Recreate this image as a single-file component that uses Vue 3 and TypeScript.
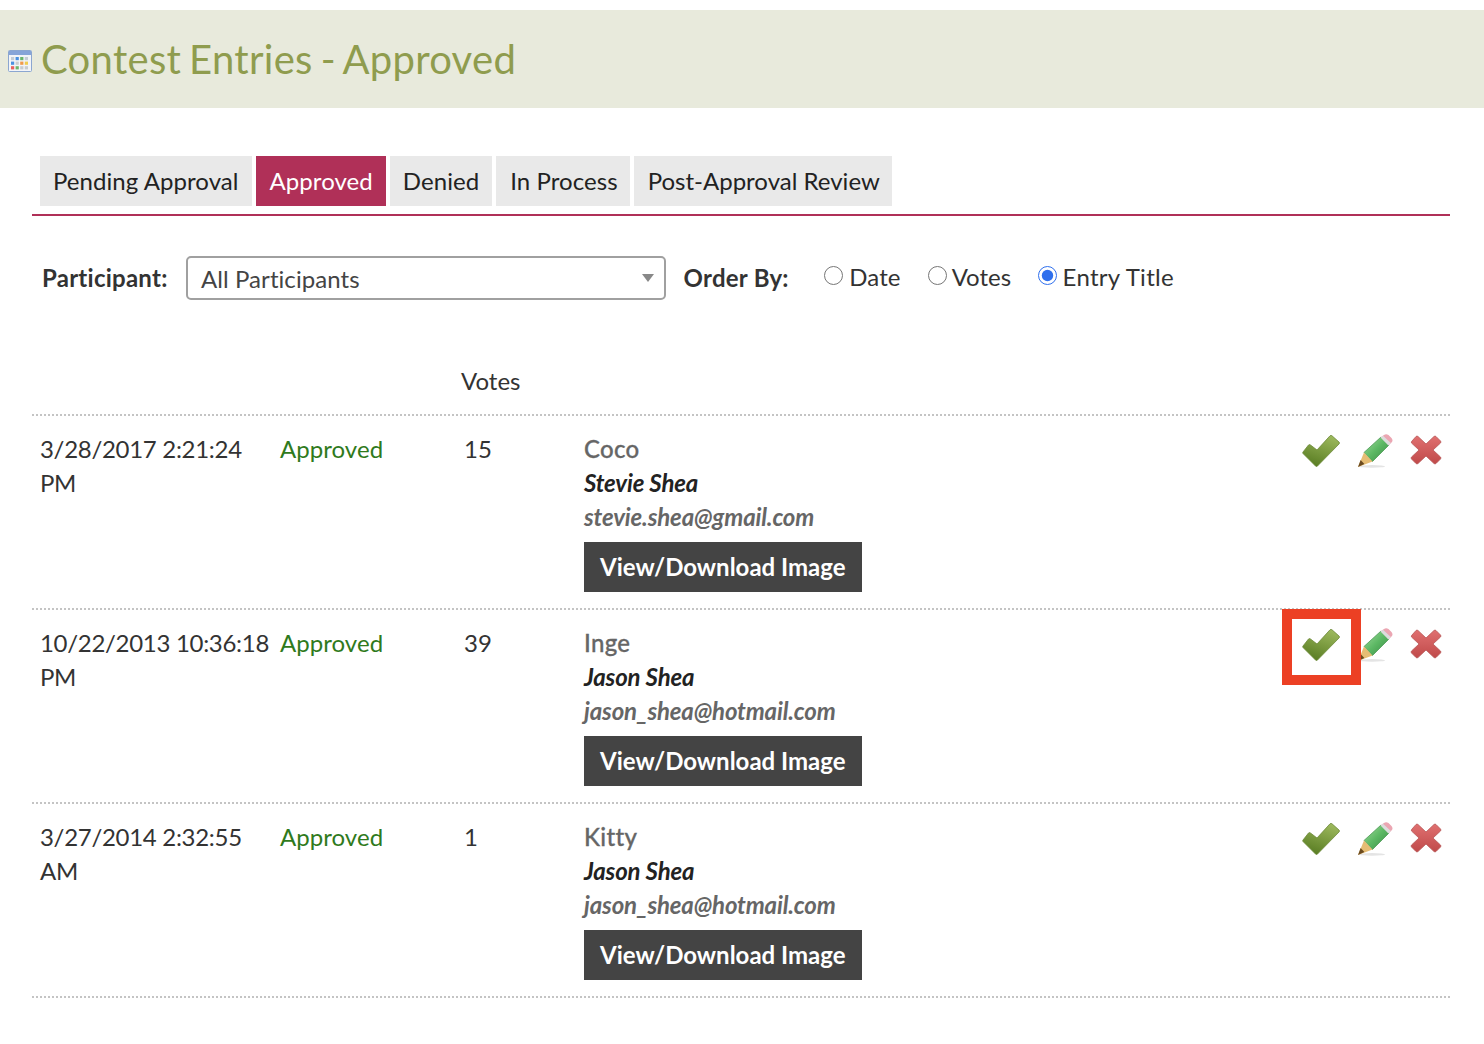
<script setup lang="ts">
interface Entry {
  date: string
  votes: number
  title: string
  name: string
  email: string
  flagged?: boolean
}

const tabs = ['Pending Approval', 'Approved', 'Denied', 'In Process', 'Post-Approval Review']
const radios = [
  { label: 'Date', checked: false, cls: 'r-date' },
  { label: 'Votes', checked: false, cls: 'r-votes' },
  { label: 'Entry Title', checked: true, cls: 'r-title' },
]
const entries: Entry[] = [
  { date: '3/28/2017 2:21:24 PM', votes: 15, title: 'Coco', name: 'Stevie Shea', email: 'stevie.shea@gmail.com' },
  { date: '10/22/2013 10:36:18 PM', votes: 39, title: 'Inge', name: 'Jason Shea', email: 'jason_shea@hotmail.com', flagged: true },
  { date: '3/27/2014 2:32:55 AM', votes: 1, title: 'Kitty', name: 'Jason Shea', email: 'jason_shea@hotmail.com' },
]
const calColors = ['#c4ccd4', '#4a90e0', '#6cb56c', '#c4ccd4', '#4a90e0', '#c8ccd0', '#f09a4a', '#f0cc50', '#e86060', '#6cb56c', '#c8ccd0', '#c8ccd0']
</script>

<template>
  <div class="page">
    <header class="banner">
      <svg class="cal" viewBox="0 0 24 22" aria-hidden="true">
        <rect x="0.5" y="0.5" width="23" height="21" rx="1" fill="#f2f4f8" stroke="#8ba6d0" />
        <rect x="1" y="1" width="22" height="4" fill="#86a4d8" />
        <rect
          v-for="(c, i) in calColors"
          :key="i"
          :x="3 + (i % 4) * 4.6"
          :y="7 + Math.floor(i / 4) * 4.6"
          width="3.2"
          height="3.2"
          :fill="c"
        />
      </svg>
      <h1>Contest Entries - Approved</h1>
    </header>

    <main class="content">
      <nav class="tabs">
        <a v-for="t in tabs" :key="t" class="tab" :class="{ active: t === 'Approved' }">{{ t }}</a>
      </nav>

      <div class="filters">
        <label class="f-label">Participant:</label>
        <div class="select">All Participants<span class="caret"></span></div>
        <span class="f-label order">Order By:</span>
        <label v-for="r in radios" :key="r.label" class="radio" :class="r.cls">
          <input type="radio" name="order" :checked="r.checked" />{{ r.label }}
        </label>
      </div>

      <div class="head-row"><span class="votes-head">Votes</span></div>

      <section class="list">
        <article v-for="e in entries" :key="e.title" class="row">
          <div class="date">{{ e.date }}</div>
          <div class="status">Approved</div>
          <div class="votes">{{ e.votes }}</div>
          <div class="info">
            <div class="title">{{ e.title }}</div>
            <div class="name">{{ e.name }}</div>
            <div class="email">{{ e.email }}</div>
            <a class="btn">View/Download Image</a>
          </div>
          <div class="actions">
            <svg class="ic-check" viewBox="0 0 38 32" aria-hidden="true">
              <defs>
                <linearGradient id="chk" x1="0.7" y1="0" x2="0.3" y2="1">
                  <stop offset="0" stop-color="#9cb85c" />
                  <stop offset="1" stop-color="#587c22" />
                </linearGradient>
              </defs>
              <path d="M1 17 L6.5 10 Q7.5 9 8.5 10 L15 15 L28 .8 Q29 0 30 .8 L37 7 Q38 8 37 9 L15.5 31 Q14.5 32 13.5 31 L1 18.5 Q.4 17.8 1 17 Z" fill="url(#chk)" stroke="#6d8a3a" stroke-width="0.8" />
            </svg>
            <svg class="ic-pencil" viewBox="0 0 36 34" aria-hidden="true">
              <defs>
                <linearGradient id="pen" x1="0" y1="0" x2="1" y2="1">
                  <stop offset="0" stop-color="#a4dca0" />
                  <stop offset="0.5" stop-color="#5cb864" />
                  <stop offset="1" stop-color="#378a42" />
                </linearGradient>
              </defs>
              <ellipse cx="15" cy="32.4" rx="13" ry="1.3" fill="#e4e4e4" />
              <path d="M7 18.5 L24 3 L32 11 L15.5 27.5 Z" fill="url(#pen)" stroke="#4c9a55" stroke-width="0.8" />
              <path d="M24 3 L27 1 Q29 -0.5 31.5 1 L34.5 4 Q36.5 6.5 34.5 8.5 L32 11 Z" fill="#eba6b2" />
              <path d="M23.5 3.5 L26 1.8 L33.8 9 L31.4 11.6 Z" fill="#dcdcdc" />
              <path d="M7 18.5 L15.5 27.5 L1 33 Z" fill="#e6bd74" />
              <path d="M3.6 26 L7.4 30 L1 33 Z" fill="#6b4a1e" />
            </svg>
            <svg class="ic-x" viewBox="0 0 32 30" aria-hidden="true">
              <defs>
                <linearGradient id="xg" x1="0" y1="0" x2="0" y2="1">
                  <stop offset="0" stop-color="#e07070" />
                  <stop offset="1" stop-color="#c04a4a" />
                </linearGradient>
              </defs>
              <path d="M2 6 L6 1.5 Q7 .6 8 1.5 L16 9 L24 1.5 Q25 .6 26 1.5 L30.5 6 Q31.4 7 30.5 8 L23 15 L30.5 22 Q31.4 23 30.5 24 L26 28.5 Q25 29.4 24 28.5 L16 21 L8 28.5 Q7 29.4 6 28.5 L1.5 24 Q.6 23 1.5 22 L9 15 L1.5 8 Q1 7 2 6 Z" fill="url(#xg)" stroke="#b85858" stroke-width="0.8" />
            </svg>
          </div>
          <div v-if="e.flagged" class="flag"></div>
        </article>
      </section>
    </main>
  </div>
</template>

<style scoped>
.page {
  padding-top: 10px;
  font-family: Lato, "Liberation Sans", sans-serif;
  font-size: 24px;
  line-height: 34px;
  color: #333;
}
.banner {
  height: 98px;
  background: #e8eadc;
  display: flex;
  align-items: center;
  padding-left: 8px;
  box-sizing: border-box;
}
.cal {
  width: 24px;
  height: 22px;
  margin-right: 9px;
  margin-top: 4px;
}
h1 {
  margin: 0;
  font-size: 40px;
  font-weight: 400;
  color: #8f9c4e;
  line-height: 48px;
  letter-spacing: 0.3px;
  word-spacing: -2.6px;
}
.content {
  padding: 48px 34px 0 32px;
}
.tabs {
  display: flex;
  gap: 4px;
  padding: 0 0 8px 8px;
  border-bottom: 2px solid #b03058;
}
.tab {
  height: 50px;
  line-height: 50px;
  padding: 0 13px;
  background: #e9e9e9;
  color: #222;
  letter-spacing: 0.06px;
}
.tab:nth-child(4) {
  padding-left: 14px;
  padding-right: 12px;
}
.tab:last-child {
  padding-left: 14px;
  padding-right: 12px;
  letter-spacing: 0.01px;
}
.tab.active {
  background: #b03058;
  color: #fff;
  padding-left: 14px;
}
.filters {
  display: flex;
  align-items: center;
  height: 44px;
  margin-top: 40px;
  padding-left: 10px;
}
.f-label {
  font-weight: 700;
  color: #333;
  letter-spacing: 0.25px;
}
.select {
  position: relative;
  width: 480px;
  height: 44px;
  line-height: 42px;
  margin-left: 18px;
  padding-left: 13.5px;
  box-sizing: border-box;
  border: 2px solid #a0a0a0;
  border-radius: 5px;
  color: #444;
  background: #fff;
  letter-spacing: 0.06px;
}
.caret {
  position: absolute;
  right: 10px;
  top: 16px;
  width: 0;
  height: 0;
  border-left: 6px solid transparent;
  border-right: 6px solid transparent;
  border-top: 8px solid #888;
}
.order {
  margin-left: 18px;
  margin-right: 35px;
}
.radio {
  display: flex;
  align-items: center;
  position: relative;
  top: -1px;
  color: #333;
  letter-spacing: 0.1px;
}
.radio input {
  width: 19px;
  height: 19px;
  margin: 0 6.5px 3px 0;
  accent-color: #2f6fed;
}
.r-votes {
  margin-left: 27px;
  letter-spacing: 0;
}
.r-votes input {
  margin-right: 5px;
}
.r-title {
  margin-left: 26.5px;
  letter-spacing: 0.3px;
}
.r-title input {
  margin-right: 6px;
}
.head-row {
  margin-top: 14px;
  height: 102px;
  padding-top: 50px;
  padding-left: 429px;
  box-sizing: border-box;
  border-bottom: 2px dotted #c4c4c4;
}
.votes-head {
  display: block;
}
.row {
  position: relative;
  height: 194px;
  box-sizing: border-box;
  padding-top: 16px;
  border-bottom: 2px dotted #c4c4c4;
  display: grid;
  grid-template-columns: 240px 184px 120px 1fr 156px;
  padding-left: 8px;
}
.status {
  color: #2f7a1c;
  letter-spacing: 0.05px;
}
.date {
  color: #333;
  letter-spacing: -0.3px;
}
.votes {
  color: #333;
}
.title {
  color: #666;
  font-weight: 500;
  -webkit-text-stroke: 0.3px #666;
  letter-spacing: 0.3px;
}
.name {
  font-style: italic;
  font-weight: 700;
  color: #222;
  letter-spacing: -0.15px;
}
.email {
  font-style: italic;
  font-weight: 700;
  color: #666;
  letter-spacing: -0.15px;
}
.btn {
  display: inline-block;
  margin-top: 8px;
  height: 50px;
  line-height: 50px;
  padding: 0 16px;
  background: #444;
  color: #fff;
  font-weight: 700;
}
.actions {
  display: flex;
  align-items: flex-start;
  justify-content: flex-end;
  padding-right: 8px;
  padding-top: 3px;
}
.ic-check {
  width: 38px;
  height: 32px;
  margin-top: 0;
}
.ic-pencil {
  width: 36px;
  height: 34px;
  margin-left: 17px;
  margin-top: -1px;
}
.ic-x {
  width: 32px;
  height: 30px;
  margin-left: 17px;
}
.flag {
  position: absolute;
  left: 1250px;
  top: -1px;
  width: 79px;
  height: 76px;
  box-sizing: border-box;
  border: 10px solid #ec4024;
}
</style>

<style>
body {
  margin: 0;
  background: #fff;
}
</style>
